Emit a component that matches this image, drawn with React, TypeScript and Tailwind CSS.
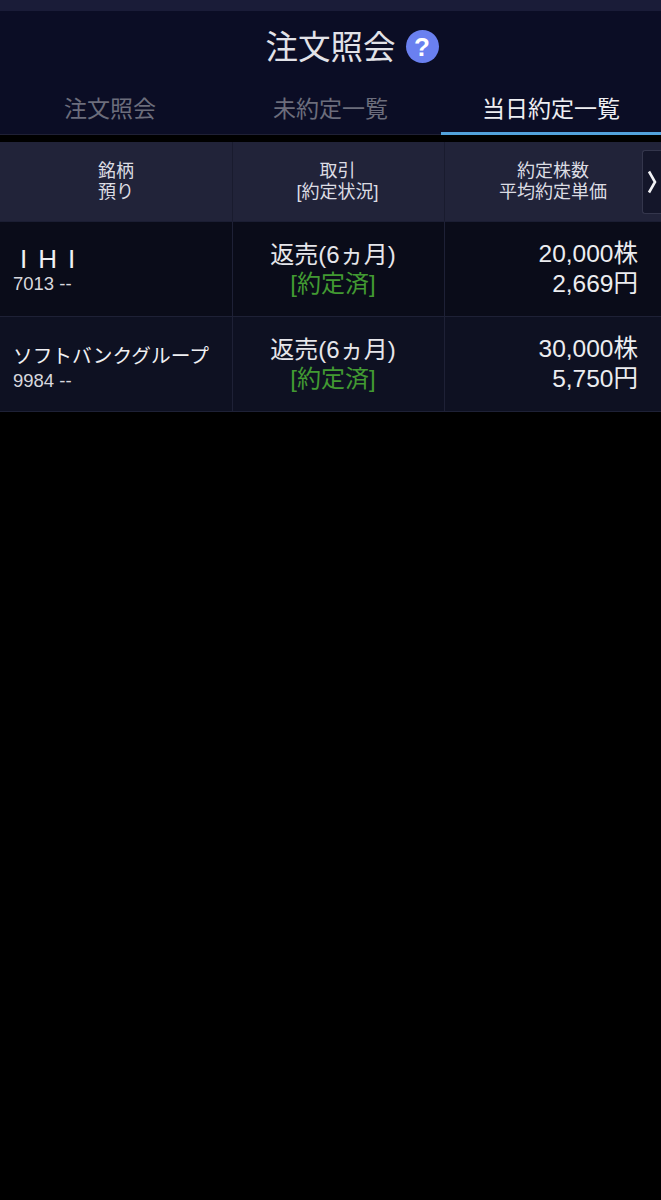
const FONT = "font-['Liberation_Sans','Noto_Sans_CJK_JP',sans-serif]";

const rows = [
  {
    name: "IHI",
    nameClass: "pl-[7px] text-[26px] tracking-[11px]",
    cellClass: "pt-[3px]",
    code: "7013 --",
    qty: "20,000株",
    price: "2,669円",
    bg: "bg-[#0a0c19]",
  },
  {
    name: "ソフトバンクグループ",
    nameClass: "text-[19.7px]",
    cellClass: "pt-[7px]",
    code: "9984 --",
    qty: "30,000株",
    price: "5,750円",
    bg: "bg-[#0e1122]",
  },
];

function HelpIcon() {
  return (
    <span className="absolute top-[-1px] left-full ml-[10px] flex h-[33px] w-[33px] items-center justify-center rounded-full bg-[#6a80f0] text-[26px] leading-none font-bold text-white">
      ?
    </span>
  );
}

function Tabs() {
  return (
    <div className="flex h-[53px] items-stretch">
      <div className="flex w-[220px] items-start justify-center border-b border-[#1f2035] pt-[13px] text-[23px] leading-[28px] text-[#6c6d7c]">
        注文照会
      </div>
      <div className="flex w-[221px] items-start justify-center border-b border-[#1f2035] pt-[13px] text-[23px] leading-[28px] text-[#6c6d7c]">
        未約定一覧
      </div>
      <div className="flex flex-1 items-start justify-center border-b-[3px] border-[#52a2dc] pt-[13px] text-[23px] leading-[28px] text-[#eeeef2]">
        当日約定一覧
      </div>
    </div>
  );
}

function TableHeader() {
  return (
    <div className="relative flex h-[79px] bg-[#212339] text-center text-[18px] leading-[21px] text-[#dcdce3]">
      <div className="flex w-[233px] flex-col items-center justify-center border-r border-[#191b2e]">
        <span>銘柄</span>
        <span>預り</span>
      </div>
      <div className="flex w-[212px] flex-col items-center justify-center border-r border-[#191b2e] pr-[2px]">
        <span>取引</span>
        <span>[約定状況]</span>
      </div>
      <div className="flex flex-1 flex-col items-center justify-center">
        <span>約定株数</span>
        <span>平均約定単価</span>
      </div>
      <div className="absolute top-[8px] right-0 flex h-[64px] w-[19px] items-center justify-center rounded-l-[3px] border border-r-0 border-[#34364c] bg-[#14162a]">
        <svg width="10" height="24" viewBox="0 0 10 24" fill="none">
          <path d="M2 1.5 L8 12 L2 22.5" stroke="#f2f2f5" strokeWidth="2.6" />
        </svg>
      </div>
    </div>
  );
}

function Row({ row }: { row: (typeof rows)[number] }) {
  return (
    <div className={`flex h-[95px] border-b border-[#1e2136] ${row.bg}`}>
      <div className={`flex w-[233px] flex-col justify-center border-r border-[#1e2136] pl-[13px] ${row.cellClass}`}>
        <span className={`leading-[26px] text-[#f0f0f3] ${row.nameClass}`}>{row.name}</span>
        <span className="text-[18.5px] leading-[24px] text-[#d8d8de]">{row.code}</span>
      </div>
      <div className="flex w-[212px] flex-col items-center justify-center border-r border-[#1e2136] pr-[11px] text-[24px] leading-[29px]">
        <span className="text-[#e6e6ea]">返売(6ヵ月)</span>
        <span className="text-[#429a32]">[約定済]</span>
      </div>
      <div className="flex flex-1 flex-col items-end justify-center pr-[23px] text-[24.5px] leading-[30px] text-[#ecedf0]">
        <span>{row.qty}</span>
        <span>{row.price}</span>
      </div>
    </div>
  );
}

export default function App() {
  return (
    <div className={`flex min-h-[1200px] w-[661px] flex-col bg-black ${FONT}`}>
      <div className="h-[11px] bg-[#1a1c38]" />
      <header className="flex h-[71px] items-center justify-center bg-[#0b0d25] pt-[4px] text-[32.5px] text-[#e2e2e8]">
        <span className="relative leading-[35px]">
          注文照会
          <HelpIcon />
        </span>
      </header>
      <nav className="bg-[#0b0d25]">
        <Tabs />
      </nav>
      <div className="h-[7px] bg-black" />
      <TableHeader />
      <div className="h-px bg-[#1b1e33]" />
      {rows.map((row) => (
        <Row key={row.code} row={row} />
      ))}
    </div>
  );
}
